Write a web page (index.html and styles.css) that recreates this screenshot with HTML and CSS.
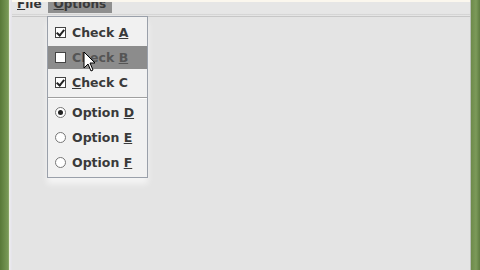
FILE: index.html
```html
<!DOCTYPE html>
<html lang="en">
<head>
    <meta charset="UTF-8">
    <title>Menu Demo</title>
    <link rel="stylesheet" href="styles.css">
</head>
<body>
    <div class="frame">
        <div class="edge edge-left"></div>
        <div class="window">
            <div class="title-strip"></div>
            <div class="menubar">
                <span class="menu-title"><u>F</u>ile</span>
                <span class="menu-title open"><u>O</u>ptions</span>
            </div>
            <div class="menubar-rule"></div>
            <div class="content"></div>
        </div>
        <div class="edge edge-right"></div>
    </div>

    <!-- Options popup -->
    <div class="popup">
        <div class="item"><span class="box checked"></span><span>Check <u>A</u></span></div>
        <div class="item armed"><span class="box"></span><span>Check <u>B</u></span></div>
        <div class="item"><span class="box checked"></span><span><u>C</u>heck C</span></div>
        <div class="separator"></div>
        <div class="item"><span class="radio selected"></span><span>Option <u>D</u></span></div>
        <div class="item"><span class="radio"></span><span>Option <u>E</u></span></div>
        <div class="item"><span class="radio"></span><span>Option <u>F</u></span></div>
    </div>

    <svg class="cursor" width="14" height="22" viewBox="0 0 14 22">
        <path d="M1 1 L1 17 L5 13 L8 20 L10 19 L7 12 L12 12 Z" fill="#fff" stroke="#000" stroke-width="1"/>
    </svg>
</body>
</html>
```

FILE: styles.css
```css
body {
    margin: 0;
    width: 480px;
    height: 270px;
    overflow: hidden;
    font-family: "DejaVu Sans", sans-serif;
    background: #e4e4e4;
}

.frame {
    display: flex;
    height: 270px;
}

.edge {
    width: 12px;
    flex: none;
}

.edge-left {
    background: linear-gradient(to right, #587838, #7a9a58 70%, #eef0e0 78%, #e8e6f2 90%, #e4e4e4);
}

.edge-right {
    width: 10px;
    background: linear-gradient(to right, #ded8ec, #6f8c4c 15%, #7c9a5a 60%, #5e7c40);
}

.window {
    flex: 1;
    display: flex;
    flex-direction: column;
}

.title-strip {
    height: 2px;
    background: #fbf7ee;
}

.menubar {
    height: 11px;
    display: flex;
    align-items: flex-end;
    overflow: hidden;
    background: #e6e6e6;
}

.menu-title {
    font-size: 12px;
    font-weight: bold;
    color: #333;
    line-height: 14px;
    padding: 0 5px 2px;
}

.menu-title.open {
    background: #8f8f8f;
    color: #3a3a3a;
    margin-left: 1px;
    padding: 0 6px 2px;
}

.menubar-rule {
    height: 4px;
    background: linear-gradient(to bottom, #ededed, #d4d4d4 40%, #e8e8e8 60%, #b8b8b8);
}

.content {
    flex: 1;
    background: #e4e4e4;
}

.popup {
    position: absolute;
    left: 47px;
    top: 16px;
    width: 99px;
    padding: 3px 0 2px;
    background: #f1f1f1;
    border: 1px solid #9aa0aa;
    box-shadow: 0 6px 6px rgba(255, 255, 255, 0.6);
}

.item {
    height: 25px;
    display: flex;
    align-items: center;
    padding-left: 7px;
    font-size: 12.5px;
    font-weight: bold;
    color: #3a3a3a;
}

.item.armed {
    background: #8c8c8c;
    color: #555;
    height: 23px;
    margin: 1px 0;
}

.box {
    width: 9px;
    height: 9px;
    border: 1px solid #444;
    background: #fff;
    margin-right: 6px;
    position: relative;
}

.box.checked::after {
    content: "";
    position: absolute;
    left: 2px;
    top: 0;
    width: 3px;
    height: 6px;
    border-right: 2px solid #222;
    border-bottom: 2px solid #222;
    transform: rotate(40deg);
}

.radio {
    width: 9px;
    height: 9px;
    border: 1px solid #777;
    border-radius: 50%;
    background: #fff;
    margin-right: 6px;
    position: relative;
}

.radio.selected::after {
    content: "";
    position: absolute;
    left: 2px;
    top: 2px;
    width: 5px;
    height: 5px;
    border-radius: 50%;
    background: #222;
}

.separator {
    height: 1px;
    margin: 2px 0 1px;
    background: #a0a0a0;
    border-bottom: 1px solid #fff;
}

.cursor {
    position: absolute;
    left: 83px;
    top: 51px;
}
```
